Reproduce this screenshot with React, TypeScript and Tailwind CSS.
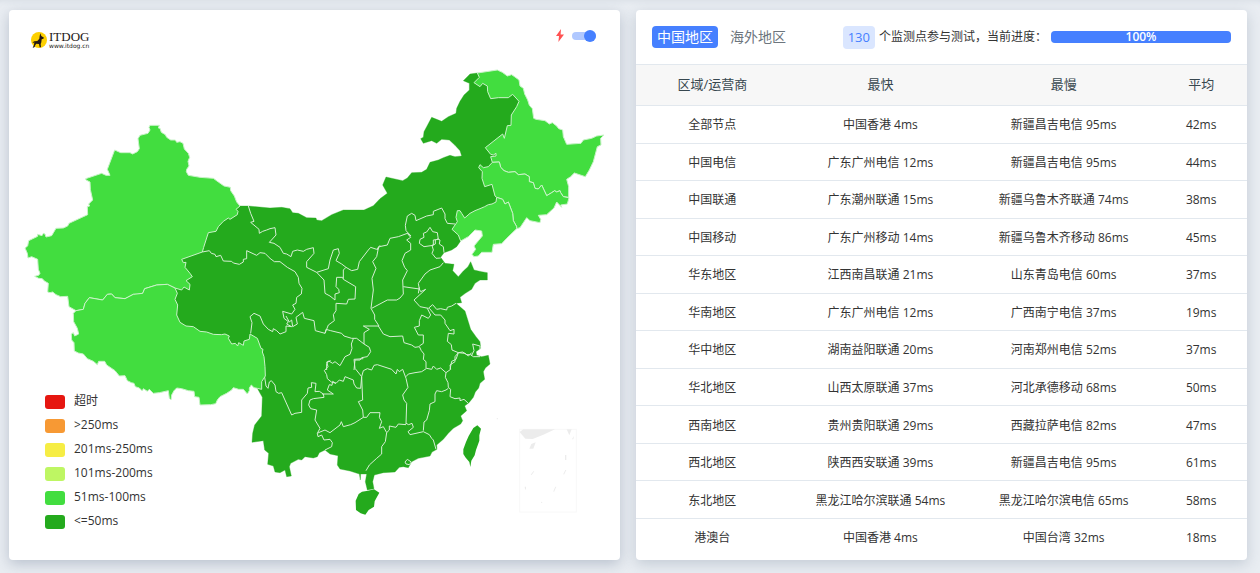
import { clsx } from "clsx";

const LEGEND = [
    { label: "超时", color: "bg-[#e61610]" },
    { label: ">250ms", color: "bg-[#f79934]" },
    { label: "201ms-250ms", color: "bg-[#f6ed44]" },
    { label: "101ms-200ms", color: "bg-[#bef663]" },
    { label: "51ms-100ms", color: "bg-[#42dd3f]" },
    { label: "<=50ms", color: "bg-[#24aa1d]" },
];

const ROWS = [
    ["全部节点", "中国香港 4ms", "新疆昌吉电信 95ms", "42ms"],
    ["中国电信", "广东广州电信 12ms", "新疆昌吉电信 95ms", "44ms"],
    ["中国联通", "广东潮州联通 15ms", "新疆乌鲁木齐联通 74ms", "38ms"],
    ["中国移动", "广东广州移动 14ms", "新疆乌鲁木齐移动 86ms", "45ms"],
    ["华东地区", "江西南昌联通 21ms", "山东青岛电信 60ms", "37ms"],
    ["华南地区", "广东广州电信 12ms", "广西南宁电信 37ms", "19ms"],
    ["华中地区", "湖南益阳联通 20ms", "河南郑州电信 52ms", "37ms"],
    ["华北地区", "山西太原联通 37ms", "河北承德移动 68ms", "50ms"],
    ["西南地区", "贵州贵阳联通 29ms", "西藏拉萨电信 82ms", "47ms"],
    ["西北地区", "陕西西安联通 39ms", "新疆昌吉电信 95ms", "61ms"],
    ["东北地区", "黑龙江哈尔滨联通 54ms", "黑龙江哈尔滨电信 65ms", "58ms"],
    ["港澳台", "中国香港 4ms", "中国台湾 32ms", "18ms"],
];

// provinces at 51ms-100ms, drawn over the mainland shape
const XINJIANG =
    "720,618 710,606 703,588 692,572 691,562 672,558 655,546 640,535 600,532 565,526 559,515 560,508 567,498 564,484 569,472 565,460 553,447 549,430 540,425 530,427 526,420 512,420 500,412 496,404 484,397 480,385 475,384 478,376 450,376 447,382 450,390 444,400 420,406 414,416 418,446 412,455 398,462 390,458 362,458 344,450 322,508 330,526 318,526 305,520 257,536 258,540 270,546 271,568 278,600 266,612 269,618 262,620 263,644 207,670 203,678 190,684 168,685 155,707 138,711 135,702 130,700 126,707 113,703 113,709 86,722 83,738 75,744 82,760 84,774 95,770 113,778 115,808 120,820 116,826 104,829 116,835 127,836 133,843 145,850 143,876 150,878 158,876 168,884 182,890 203,889 207,920 228,932 250,928 255,910 268,893 308,900 322,883 335,882 345,893 375,896 400,883 412,883 428,880 434,866 470,855 502,853 525,864 545,870 552,861 568,870 570,853 558,842 577,830 570,820 555,802 558,787 550,788 545,778 607,756 611,742 625,698 648,694 655,680 670,664 685,654 690,658 712,644 714,634 708,628";
const TIBET =
    "228,932 220,940 221,965 232,985 236,1002 224,1008 220,998 214,1002 215,1020 222,1028 223,1053 235,1059 250,1062 262,1076 280,1084 292,1094 296,1084 314,1084 320,1095 345,1112 358,1128 375,1127 382,1142 394,1148 402,1150 406,1160 418,1164 427,1173 430,1166 442,1174 448,1168 460,1180 478,1178 505,1172 508,1195 513,1200 515,1185 522,1172 530,1164 545,1166 565,1172 582,1174 584,1190 597,1192 600,1215 632,1214 647,1211 652,1200 660,1190 680,1180 695,1170 700,1163 716,1168 730,1168 742,1182 748,1172 748,1164 754,1155 762,1163 772,1165 785,1168 785,1145 796,1128 795,1100 792,1070 787,1056 789,1048 783,1045 772,1015 750,1002 748,1018 732,1023 730,1036 716,1028 713,1038 706,1030 695,1032 685,1015 688,1008 675,1002 664,1004 640,1003 620,996 600,994 580,980 558,978 540,967 530,945 533,915 525,898 532,880 525,864 502,853 470,855 434,866 428,880 400,883 375,896 345,893 335,882 322,883 308,900 268,893 255,910 250,928";
const HEILONGJIANG =
    "1432,219 1492,210 1507,217 1522,228 1535,224 1545,231 1557,240 1560,258 1570,265 1574,282 1583,300 1588,316 1597,326 1601,355 1608,358 1635,362 1648,372 1657,368 1670,378 1676,386 1688,390 1690,410 1700,433 1743,430 1750,420 1775,415 1790,408 1812,405 1802,415 1803,435 1792,440 1780,485 1768,510 1756,530 1723,519 1712,530 1700,538 1706,560 1706,592 1690,590 1682,578 1680,572 1670,576 1664,572 1655,578 1640,587 1632,570 1625,555 1615,567 1605,565 1600,548 1588,545 1588,530 1575,522 1555,524 1545,515 1525,517 1512,512 1502,502 1498,486 1477,487 1472,470 1488,468 1488,460 1480,465 1472,463 1456,443 1508,402 1513,415 1522,377 1533,376 1534,345 1550,320 1557,304 1538,283 1525,293 1495,293 1472,296 1463,275 1462,258 1448,250 1440,260 1422,248 1438,232";
const JILIN =
    "1477,487 1465,500 1450,503 1440,494 1436,503 1447,515 1446,535 1454,560 1476,553 1485,588 1490,592 1508,598 1515,612 1525,606 1538,640 1540,662 1550,680 1550,686 1560,683 1580,653 1590,662 1620,668 1622,658 1615,646 1640,644 1662,624 1670,606 1685,622 1682,615 1702,612 1707,593 1690,590 1682,578 1680,572 1670,576 1664,572 1655,578 1640,587 1632,570 1625,555 1615,567 1605,565 1600,548 1588,545 1588,530 1575,522 1555,524 1545,515 1525,517 1512,512 1502,502 1498,486";
const LIAONING =
    "1490,592 1488,606 1476,612 1465,614 1454,620 1440,626 1425,632 1410,640 1394,654 1385,640 1380,632 1372,632 1368,652 1372,665 1356,688 1375,705 1382,723 1405,710 1425,690 1445,693 1447,708 1422,738 1427,748 1416,763 1422,770 1435,768 1445,757 1476,757 1480,733 1505,731 1520,715 1550,686 1550,680 1540,662 1538,640 1525,606 1515,612 1508,598";

const MAINLAND =
    "720,618 745,618 810,624 845,622 870,626 878,638 895,640 920,653 948,654 950,660 965,662 995,644 1030,630 1092,630 1120,617 1140,596 1162,580 1148,555 1158,531 1208,542 1222,534 1235,518 1265,517 1280,508 1290,487 1315,480 1330,473 1350,466 1365,470 1385,468 1380,452 1365,436 1348,420 1325,418 1310,430 1295,422 1270,430 1262,416 1270,412 1272,395 1295,352 1325,364 1345,350 1368,340 1370,325 1380,304 1392,285 1408,270 1408,250 1390,242 1410,222 1432,219 1445,225 1560,290 1545,400 1510,440 1500,480 1510,600 1400,665 1390,715 1382,723 1370,740 1355,750 1332,758 1322,772 1335,790 1362,793 1358,812 1375,830 1390,813 1404,800 1412,785 1422,810 1445,815 1462,818 1462,840 1440,840 1425,850 1415,868 1396,880 1380,892 1385,908 1368,910 1395,933 1405,965 1412,988 1428,1010 1440,1025 1442,1045 1428,1055 1430,1066 1445,1070 1465,1066 1470,1092 1456,1104 1450,1115 1454,1138 1440,1150 1436,1164 1426,1176 1420,1192 1407,1208 1394,1218 1400,1232 1382,1248 1388,1262 1382,1272 1360,1285 1345,1300 1330,1318 1310,1335 1311,1348 1296,1356 1290,1368 1255,1375 1235,1385 1225,1403 1210,1400 1198,1402 1185,1416 1150,1418 1123,1425 1118,1445 1122,1466 1102,1470 1096,1445 1100,1422 1082,1422 1081,1440 1078,1422 1050,1413 1020,1407 1012,1395 1014,1367 990,1362 975,1350 958,1358 952,1370 940,1374 915,1370 905,1380 895,1378 872,1390 868,1400 874,1428 860,1430 855,1410 840,1418 825,1416 820,1398 803,1393 806,1360 794,1350 790,1322 756,1327 758,1300 764,1275 785,1248 787,1192 772,1165 760,1100 740,1060 600,1040 480,960 490,860 530,830 520,760 600,700 690,625";

// borders between provinces, grouped by area; each area has its own origin
const BORDERS = [
    {
        name: "northwest",
        origin: "translate(540 570)",
        lines: [
            "205,48 212,70 222,94 212,97 237,118 238,130 248,124 260,120 270,116 285,113 288,135 268,157 282,160 300,172 310,190 320,192 333,200 338,184 352,180 370,184 380,178 400,173 402,190 380,215 380,232 410,247 445,236 450,210 460,180 475,176 478,190 468,212 485,222 498,232 515,242 533,238 538,215 565,180 572,172 590,178 600,166",
            "67,186 88,182 94,190 105,193 108,200 122,196 130,213 155,214 160,219 178,223 190,216 190,208 200,206 200,182 230,196 240,188 255,190 270,205 283,215 300,215 322,232 345,245 355,262 357,280 366,295 364,312 350,322 348,340 338,345 345,358 335,372 308,364 312,385 325,395 320,402 335,410 318,408 318,425 300,432 290,422 280,416 278,425 265,418 250,402 240,378 222,370 210,380 216,398 212,430",
            "318,378 328,396 335,390 338,410 352,402 348,382 368,367 373,385 402,392 406,422 435,430 445,405 463,392 460,374 468,362 468,340 500,342 505,328 525,327 527,290 490,268 488,262 470,262 468,290 476,298 478,308 465,312 465,330 450,318 435,310 432,270 410,247",
            "490,266 490,240 498,232",
            "435,430 438,418 452,422 485,430 492,438 515,445 530,445 552,462 568,472 572,485 562,500 545,503 540,510 525,510 522,540",
            "520,446 514,462 516,475 510,493 495,500 480,527 465,515 458,520 446,513 440,522 440,540",
            "596,170 590,200 578,215 588,235 576,265 580,300 573,355 584,375 584,388 597,408 550,408 568,418 552,428 552,462",
        ],
    },
    {
        name: "north",
        origin: "translate(1050 600)",
        lines: [
            "82,150 88,140 112,135 120,115 145,110 172,100 183,108 168,92 166,76 172,48 185,40 195,46 198,62 230,48 250,44 250,34 275,24 285,42 285,56 292,70 315,72",
            "172,100 182,112 170,120 182,130 182,150 165,160 156,182 164,202 172,212 158,240 160,282 150,294 140,300 112,300 65,325",
            "160,260 208,267 205,250 225,222 240,210 270,200 280,188",
            "208,267 212,275 227,268 192,300 210,320 235,325 248,314 260,328 272,326 290,330 292,322 305,318 318,310",
            "208,262 205,280",
            "232,325 242,345 235,355 215,345 208,362 208,378 193,382 205,405 220,405 220,430 208,438",
            "85,378 100,402 120,410 158,408 162,428 185,435 195,442 208,440 214,452 222,462 220,478 228,485 228,505",
            "238,325 255,345 272,345 285,360 285,370 300,392 312,388 312,402 295,400 292,424 304,434 306,450 325,458 338,456 350,464 362,464 370,470 390,470",
            "364,468 372,452 368,432 390,438 390,448",
            "208,130 210,118 222,112 220,100 230,96 240,82 248,95 262,98 265,118 250,120 250,136 222,140 208,130",
            "262,116 270,120 268,132 280,140 282,158",
            "256,120 256,132 246,136 250,150 246,160 258,175 272,174",
            "325,458 318,478 305,484 300,508",
        ],
    },
    {
        name: "southwest",
        origin: "translate(690 900)",
        lines: [
            "103,225 108,258 114,265 118,246 124,242 135,255 138,275 146,280 155,278 185,345 195,340 215,337 215,300 232,280 234,264 245,262 244,248 258,250 255,275 268,274 280,282 282,292 250,296 240,300 236,315 242,326 260,330 255,360 270,385 262,400",
            "276,282 310,282 292,270 298,254 306,256 308,244 318,250",
            "302,182 290,186 294,200 283,212 290,224 292,236 304,246 318,250 328,240 340,244 345,230 370,240 372,252 380,264 392,265 395,230 375,205 372,178 400,176",
            "262,400 270,396 285,390 300,398 330,375 334,365 340,380 362,374 375,368 400,352 398,330 385,305 398,300 395,230",
            "262,400 264,410 275,405 282,420 300,418 307,428 305,440 285,450",
            "395,230 400,212 412,206 425,210 432,196 442,194 485,208 498,222 502,208 508,215 518,208 528,235 534,262 518,285 522,300 530,310 528,372",
            "400,352 410,352 420,338 450,338 448,352 455,365 448,385 460,380 470,398 478,390 478,378 498,382 505,372 528,374",
            "470,398 466,425 455,440 455,462 440,475 418,495 408,512",
        ],
    },
    {
        name: "southeast",
        origin: "translate(1020 1020)",
        lines: [
            "198,110 205,102 225,98 245,95 260,85 275,88 280,78 290,88 302,84 318,98 316,112 324,128 325,142 332,148 330,170 345,176 360,174 360,182 372,178 385,190",
            "325,145 318,150 305,155 290,152 285,162 285,185 270,192 268,212 260,240 252,246 250,272",
            "198,250 206,254 216,250 220,262 204,275 210,284 250,275 268,284 275,295 280,300 288,328",
            "318,98 332,88 330,75 345,65 345,50 355,38",
            "355,38 375,40 385,48 395,38",
            "195,366 202,358 214,366 208,374 198,372 195,366",
        ],
    },
];

function ChinaMap() {
    return (
        <svg viewBox="27 180 1833 1500" className="block w-full" role="img" aria-label="中国地区延迟地图">
            <polygon points={MAINLAND} className="fill-[#24aa1d] stroke-[#24aa1d]" strokeWidth="1" />
            <g className="fill-none stroke-[#d5efd3]" strokeWidth="3" strokeLinejoin="round">
                {BORDERS.map((area) => (
                    <g key={area.name} transform={area.origin}>
                        {area.lines.map((points) => (
                            <polyline key={points} points={points} />
                        ))}
                    </g>
                ))}
            </g>
            <g className="fill-[#42dd3f] stroke-[#c9f3c8]" strokeWidth="3" strokeLinejoin="round">
                {[XINJIANG, TIBET, HEILONGJIANG, JILIN, LIAONING].map((points) => (
                    <polygon key={points} points={points} />
                ))}
            </g>

            <g transform="translate(1020 1020)">
                {/* Hainan and Taiwan */}
                <g className="fill-[#24aa1d]">
                    <polygon points="47,482 56,462 66,455 84,452 102,448 118,458 108,476 104,484 102,500 86,510 76,524 62,520 48,510" />
                    <polygon points="370,342 370,328 378,306 386,288 400,264 412,256 423,266 418,286 418,302 408,330 404,346 394,362 391,381 388,366 376,352" />
                </g>
                {/* South China Sea inset */}
                <rect x="539" y="268" width="170" height="248" className="fill-none stroke-[#f8f8f8]" strokeWidth="3" />
                <g className="fill-[#ececec]">
                    <polygon points="539,276 550,268 645,268 610,284 578,297 556,296" />
                    <polygon points="680,268 695,268 688,286" />
                    <polygon points="574,312 587,307 580,326 568,326" />
                    <polygon points="675,345 679,345 679,360 675,360" />
                    <polygon points="696,298 702,288 700,298" />
                    <polygon points="676,390 679,390 672,404 670,402" />
                    <polygon points="646,440 649,440 642,456 640,454" />
                    <polygon points="580,394 583,394 575,405 572,404" />
                    <polygon points="554,440 558,440 558,450 555,446" />
                    <circle cx="605" cy="487" r="2" />
                    <circle cx="472" cy="236" r="2" />
                </g>
            </g>
        </svg>
    );
}

function Logo() {
    return (
        <a href="#" className="flex items-center gap-0.5 text-[#231815]">
            <svg viewBox="0 0 48 48" className="size-4" aria-hidden="true">
                <circle cx="24" cy="24" r="24" fill="#fdd000" />
                <path
                    d="M28 4l3 8 8 5-2 3-5 2-1 9 -2 5 1 10h-4l-2-10-8-1-3 4-2 6-6 3 2-5 2-4 1-8-4 2-1-2 5-3 9-1 6-7 1-8z"
                    fill="#231815"
                />
            </svg>
            <span className="flex flex-col">
                <span className="font-['Liberation_Serif',serif] text-[13px] leading-[12px]">ITDOG</span>
                <span className="font-['DejaVu_Sans',sans-serif] text-[6px] leading-[6px]">www.itdog.cn</span>
            </span>
        </a>
    );
}

function MapCard() {
    return (
        <section className="relative rounded bg-white shadow-[0_4px_14px_rgba(60,80,110,0.28)]">
            <header className="flex h-[50px] items-start justify-between pt-[19px] pr-6 pl-[22px]">
                <div className="pt-[2px]">
                    <Logo />
                </div>
                <label className="flex items-center gap-2">
                    <svg viewBox="0 0 8 13" className="h-[13px] w-2" role="img" aria-label="快速模式">
                        <path d="M5 0L0 7h3L2.4 13L8 5.4H4.6z" fill="#ff5252" />
                    </svg>
                    <input
                        type="checkbox"
                        defaultChecked
                        className="relative h-2 w-6 appearance-none rounded-full bg-[#b0c8ff] before:absolute before:-top-[2px] before:right-0 before:size-3 before:rounded-full before:bg-[#4680ff]"
                    />
                </label>
            </header>
            <ChinaMap />
            <ul className="absolute bottom-[27px] left-9 text-[12px] leading-6 text-[#333]">
                {LEGEND.map((item) => (
                    <li key={item.label} className="flex items-center gap-[9px]">
                        <span className={clsx("mt-[2px] h-[14px] w-5 rounded-[3px]", item.color)} />
                        {item.label}
                    </li>
                ))}
            </ul>
        </section>
    );
}

function StatsCard() {
    return (
        <section className="flex flex-col rounded bg-white pb-[5px] shadow-[0_4px_14px_rgba(60,80,110,0.22)]">
            <header className="flex h-[54px] items-center justify-between px-4">
                <div className="flex gap-[7px] text-[14px] leading-[22px]">
                    <button type="button" className="rounded bg-[#4680ff] px-[5px] text-white">
                        中国地区
                    </button>
                    <button type="button" className="rounded px-[5px] text-[#6c757d]">
                        海外地区
                    </button>
                </div>
                <div className="flex items-center gap-1 text-[12px] text-[#333]">
                    <span className="rounded bg-[#dae6ff] px-[5px] text-[13px] leading-[23px] text-[#4680ff]">130</span>
                    <span>个监测点参与测试，当前进度：</span>
                    <div
                        role="progressbar"
                        aria-label="当前进度"
                        aria-valuenow={100}
                        className="flex h-3 w-[180px] items-center rounded bg-[#e9ecef]"
                    >
                        <div className="flex h-full w-full items-center justify-center rounded bg-[#4680ff] font-semibold text-white">
                            100%
                        </div>
                    </div>
                </div>
            </header>
            <div className="flex-1">
                <table className="h-full w-full table-fixed border-collapse text-center text-[12px] text-[#333]">
                    <thead>
                        <tr className="h-[41px] border-y border-[#e2e8ee] bg-[#f7f7f7] text-[13px] text-[#37474f]">
                            <th className="w-1/4 font-normal">区域/运营商</th>
                            <th className="w-[30%] font-normal">最快</th>
                            <th className="w-[30%] font-normal">最慢</th>
                            <th className="w-[15%] font-normal">平均</th>
                        </tr>
                    </thead>
                    <tbody>
                        {ROWS.map((row) => (
                            <tr key={row[0]} className="border-b border-[#e2e8ee] last:border-b-0">
                                {row.map((cell, i) => (
                                    <td key={i} className="pt-0.5">
                                        {cell}
                                    </td>
                                ))}
                            </tr>
                        ))}
                    </tbody>
                </table>
            </div>
        </section>
    );
}

export default function App() {
    return (
        <main className="min-h-screen bg-[#e9edf2] pt-[10px] pr-[13px] pb-[13px] pl-[9px] font-['Open_Sans','Noto_Sans_CJK_SC',sans-serif] shadow-[inset_0_6px_8px_-8px_rgba(60,80,110,0.2)]">
            <div className="grid grid-cols-2 gap-4">
                <MapCard />
                <StatsCard />
            </div>
        </main>
    );
}
